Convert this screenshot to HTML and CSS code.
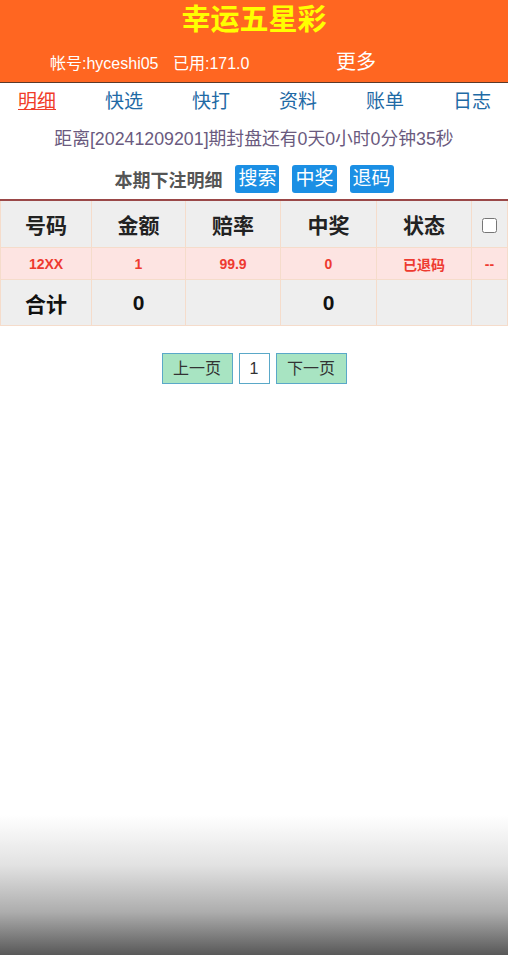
FILE: index.html
```html
<!DOCTYPE html>
<html lang="zh-CN">
<head>
    <meta charset="UTF-8">
    <meta name="viewport" content="width=device-width, initial-scale=1.0">
    <title>幸运五星彩</title>
    <link rel="stylesheet" href="styles.css">
</head>
<body>
    <div class="header">
        <div class="title">幸运五星彩</div>
        <div class="info">
            <span class="account">帐号:hyceshi05</span>
            <span class="used">已用:171.0</span>
            <span class="more">更多</span>
        </div>
    </div>

    <div class="nav">
        <a class="active">明细</a>
        <a>快选</a>
        <a>快打</a>
        <a>资料</a>
        <a>账单</a>
        <a>日志</a>
    </div>

    <div class="countdown">距离[20241209201]期封盘还有0天0小时0分钟35秒</div>

    <div class="toolbar">
        <span class="label">本期下注明细</span>
        <button class="btn">搜索</button>
        <button class="btn">中奖</button>
        <button class="btn">退码</button>
    </div>

    <table class="bets">
        <colgroup>
            <col style="width:91px">
            <col style="width:94px">
            <col style="width:95px">
            <col style="width:96px">
            <col style="width:95px">
            <col>
        </colgroup>
        <tr class="head">
            <th>号码</th>
            <th>金额</th>
            <th>赔率</th>
            <th>中奖</th>
            <th>状态</th>
            <th><input type="checkbox" class="check"></th>
        </tr>
        <tr class="row">
            <td>12XX</td>
            <td>1</td>
            <td>99.9</td>
            <td>0</td>
            <td>已退码</td>
            <td>--</td>
        </tr>
        <tr class="total">
            <td>合计</td>
            <td>0</td>
            <td></td>
            <td>0</td>
            <td></td>
            <td></td>
        </tr>
    </table>

    <div class="pager">
        <span class="page-btn">上一页</span>
        <span class="page-num">1</span>
        <span class="page-btn">下一页</span>
    </div>
</body>
</html>
```

FILE: styles.css
```css
html {
    height: 100%;
    background: linear-gradient(to bottom, #fff 0, #fff 815px, #e2e2e2 865px, #adadad 912px, #585858 955px);
}
body {
    margin: 0;
    font-family: "Liberation Sans", "Noto Sans CJK SC", sans-serif;
    color: #333;
}
.header {
    height: 82px;
    background-color: #ff6621;
    border-bottom: 1px solid #5a3a2a;
}
.title {
    text-align: center;
    color: #ffff00;
    font-size: 29px;
    font-weight: bold;
    line-height: 40px;
}
.info {
    margin-top: 7px;
    padding-left: 50px;
    line-height: 30px;
    color: #fff;
    font-size: 16px;
}
.used {
    margin-left: 10px;
}
.more {
    margin-left: 82px;
    font-size: 20px;
}
.nav {
    display: flex;
    justify-content: space-between;
    padding: 0 17px 0 18px;
    line-height: 38px;
    font-size: 19px;
}
.nav a {
    color: #1f6aa5;
}
.nav a.active {
    color: #f03c28;
    text-decoration: underline;
}
.countdown {
    text-align: center;
    line-height: 36px;
    font-size: 17.8px;
    color: #6a5a7e;
}
.toolbar {
    display: flex;
    justify-content: center;
    align-items: center;
    gap: 13px;
    margin: 8px 0 6px;
    height: 28px;
}
.label {
    font-size: 18px;
    font-weight: bold;
    color: #555;
}
.btn {
    height: 28px;
    padding: 0 3px;
    border: none;
    border-radius: 3px;
    background-color: #1b8fe4;
    color: #fff;
    font-family: inherit;
    font-size: 19px;
    line-height: 28px;
}
.bets {
    width: 100%;
    border-collapse: collapse;
    table-layout: fixed;
    border-top: 2px solid #9a4848;
}
.bets th, .bets td {
    border: 1px solid #f5dccb;
    text-align: center;
    padding: 0;
}
.head th {
    height: 46px;
    background-color: #eeeeee;
    font-size: 21px;
    color: #222;
}
.check {
    width: 15px;
    height: 15px;
    margin: 0;
    vertical-align: middle;
}
.row td {
    height: 31px;
    background-color: #fde4e2;
    color: #ee3a30;
    font-size: 14px;
    font-weight: bold;
}
.total td {
    height: 45px;
    background-color: #eeeeee;
    font-size: 21px;
    font-weight: bold;
    color: #111;
}
.pager {
    display: flex;
    justify-content: center;
    gap: 6px;
    margin-top: 27px;
}
.page-btn, .page-num {
    height: 29px;
    line-height: 29px;
    border: 1px solid #5aa8c8;
    font-size: 16px;
    color: #333;
    text-align: center;
}
.page-btn {
    width: 69px;
    background-color: #a8e4c2;
}
.page-num {
    width: 29px;
    background-color: #fff;
}
```
